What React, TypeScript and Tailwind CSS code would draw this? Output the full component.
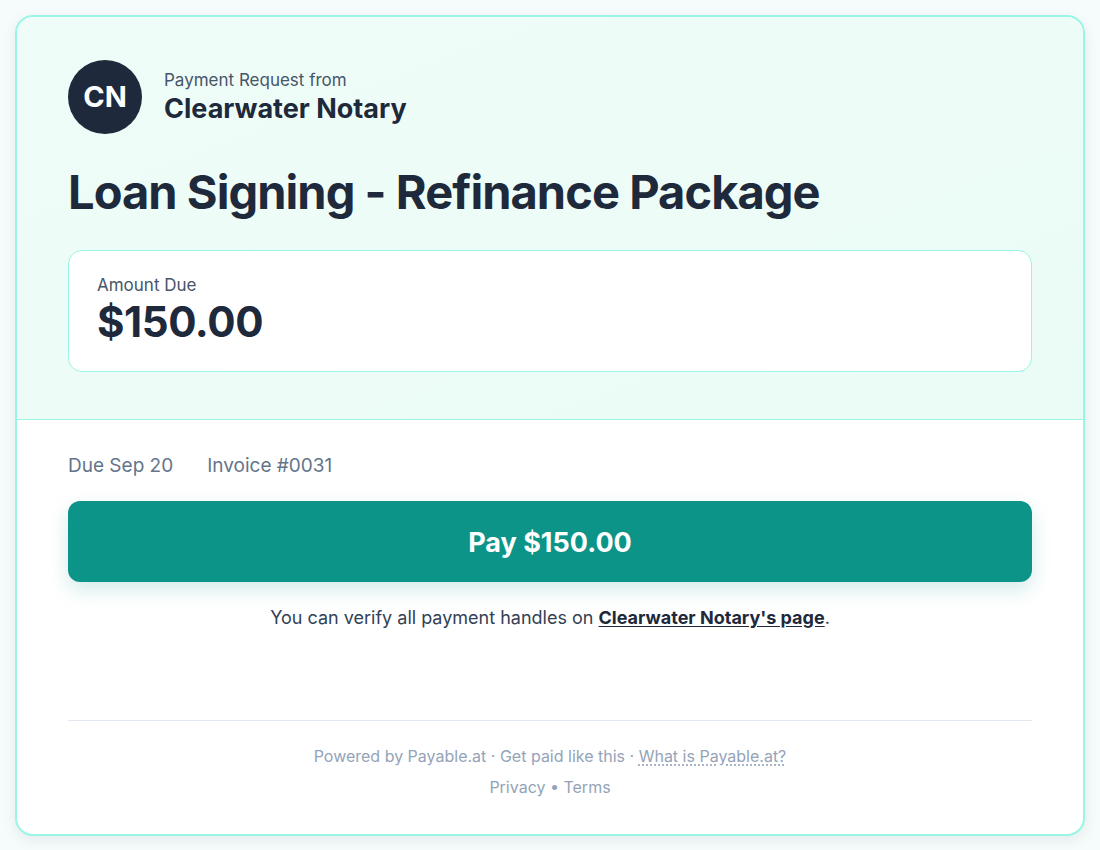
export default function App() {
  return (
    <div
      className="min-h-screen bg-[#f6fcfb] p-[15px]"
      style={{ fontFamily: 'Inter, "Noto Sans", sans-serif' }}
    >
      <div className="overflow-hidden rounded-[18px] border-2 border-[#99f6e4] bg-white shadow-[0_4px_14px_rgba(15,23,42,0.08)]">
        {/* header */}
        <div className="border-b border-[#99f6e4] bg-gradient-to-br from-[#effdf9] to-[#ebfbf5] px-[51px] pt-[43px] pb-[47px]">
          <div className="flex items-center gap-[22px]">
            <div className="flex h-[74px] w-[74px] items-center justify-center rounded-full bg-[#1e293b] text-[29px] font-bold text-white">
              CN
            </div>
            <div className="flex flex-col">
              <span className="text-[17px] leading-[22px] text-[#475569]">Payment Request from</span>
              <span className="mt-[2px] text-[27px] font-bold leading-[32px] text-[#1e293b]">
                Clearwater Notary
              </span>
            </div>
          </div>

          <h1 className="mt-[29px] text-[47px] font-bold leading-[58px] tracking-[-0.02em] text-[#1e293b]">
            Loan Signing - Refinance Package
          </h1>

          <div className="mt-[29px] rounded-[14px] border border-[#99f6e4] bg-white px-[28px] pt-[22px] pb-[24px]">
            <div className="text-[17px] leading-[24px] text-[#475569]">Amount Due</div>
            <div className="text-[42px] font-bold leading-[50px] tracking-[-0.01em] text-[#1e293b]">
              $150.00
            </div>
          </div>
        </div>

        {/* body */}
        <div className="px-[51px] pt-[33px] pb-[35px]">
          <div className="flex gap-[34px] text-[19px] leading-[26px] text-[#64748b]">
            <span>Due Sep 20</span>
            <span>Invoice #0031</span>
          </div>

          <button className="mt-[22px] flex h-[81px] w-full items-center justify-center rounded-[12px] bg-[#0d9488] pt-[3px] text-[27px] font-bold text-white shadow-[0_8px_20px_rgba(13,148,136,0.18)]">
            Pay $150.00
          </button>

          <p className="mt-[23px] text-center text-[18px] leading-[26px] text-[#334155]">
            You can verify all payment handles on{' '}
            <a className="font-bold text-[#1e293b] underline underline-offset-2">Clearwater Notary's page</a>.
          </p>

          <div className="mt-[89px] border-t border-[#e2e8f0] pt-[23px] text-center text-[16px] text-[#94a3b8]">
            <p className="leading-[24px]">
              Powered by Payable.at · Get paid like this ·{' '}
              <span className="underline decoration-dotted underline-offset-[3px]">What is Payable.at?</span>
            </p>
            <p className="mt-[7px] leading-[24px]">Privacy • Terms</p>
          </div>
        </div>
      </div>
    </div>
  );
}
